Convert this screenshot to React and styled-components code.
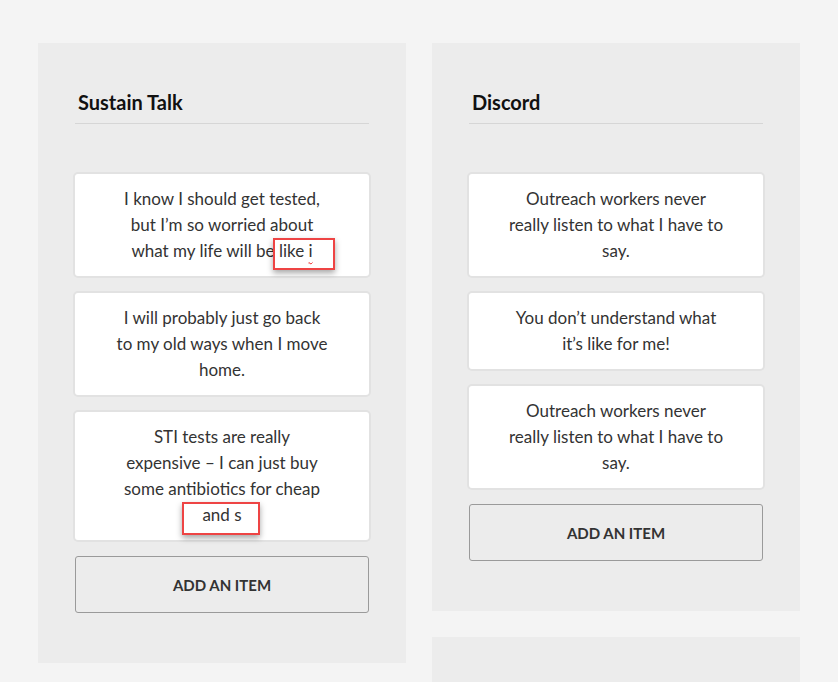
import React from "react";
import styled, { createGlobalStyle } from "styled-components";

const Global = createGlobalStyle`
  html, body { margin: 0; padding: 0; background: #f4f4f4; }
  body { font-family: Lato, "Open Sans", sans-serif; color: #333; overflow: hidden; }
`;

const Board = styled.div`
  display: flex;
  align-items: flex-start;
  gap: 26px;
  padding: 43px 0 0 38px;
  height: 682px;
  box-sizing: border-box;
`;

const Column = styled.div`
  display: flex;
  flex-direction: column;
  gap: 26px;
  width: 368px;
`;

const Panel = styled.section`
  background: #ececec;
  padding: 47px 35px ${(p) => (p.$empty ? "0" : "50px")};
  min-height: ${(p) => (p.$empty ? "100px" : "0")};
  display: flex;
  flex-direction: column;
`;

const Title = styled.h2`
  margin: 0 2px;
  padding: 0 0 9px 3px;
  font-size: 20px;
  line-height: 24px;
  font-weight: 700;
  color: #111;
  border-bottom: 1px solid #d6d6d6;
`;

const List = styled.div`
  display: flex;
  flex-direction: column;
  gap: 13px;
  margin-top: 48px;
`;

const Card = styled.div`
  background: #fff;
  border: 2px solid #e2e2e2;
  border-radius: 5px;
  padding: 12px 0 12px;
  display: flex;
  justify-content: center;
`;

const CardText = styled.p`
  margin: 0;
  width: ${(p) => p.$w}px;
  text-align: center;
  font-size: 17px;
  line-height: 26px;
  color: #333;
`;

const Marked = styled.span`
  position: relative;
  &::after {
    content: "";
    position: absolute;
    left: ${(p) => p.$l}px;
    right: ${(p) => p.$r}px;
    top: ${(p) => p.$t}px;
    bottom: ${(p) => p.$b}px;
    border: 2px solid #ee4444;
    box-shadow: 0 3px 6px rgba(0, 0, 0, 0.35);
    pointer-events: none;
  }
`;

const Squiggle = styled.span`
  text-decoration: underline wavy #e22;
  text-decoration-thickness: 1px;
  text-underline-offset: 3px;
`;

const AddButton = styled.button`
  margin: 14px 2px 0;
  height: 57px;
  background: transparent;
  border: 1px solid #9a9a9a;
  border-radius: 3px;
  font-family: Lato, "Open Sans", sans-serif;
  font-size: 15px;
  font-weight: 700;
  color: #333;
  text-transform: uppercase;
  cursor: pointer;
`;

export default function App() {
  return (
    <>
      <Global />
      <Board>
        <Column>
          <Panel>
            <Title>Sustain Talk</Title>
            <List>
              <Card>
                <CardText $w={211}>
                  I know I should get tested, but I’m so worried about what my life will be{" "}
                  <Marked $l={-6} $r={-22} $t={-2} $b={-9}>
                    like <Squiggle>i</Squiggle>
                  </Marked>
                </CardText>
              </Card>
              <Card>
                <CardText $w={211}>I will probably just go back to my old ways when I move home.</CardText>
              </Card>
              <Card>
                <CardText $w={211}>
                  STI tests are really expensive – I can just buy some antibiotics for cheap{" "}
                  <Marked $l={-20} $r={-18} $t={-2} $b={-10}>
                    and s
                  </Marked>
                </CardText>
              </Card>
            </List>
            <AddButton>Add an item</AddButton>
          </Panel>
        </Column>
        <Column>
          <Panel>
            <Title>Discord</Title>
            <List>
              <Card>
                <CardText $w={219}>Outreach workers never really listen to what I have to say.</CardText>
              </Card>
              <Card>
                <CardText $w={219}>You don’t understand what it’s like for me!</CardText>
              </Card>
              <Card>
                <CardText $w={219}>Outreach workers never really listen to what I have to say.</CardText>
              </Card>
            </List>
            <AddButton>Add an item</AddButton>
          </Panel>
          <Panel $empty />
        </Column>
      </Board>
    </>
  );
}
